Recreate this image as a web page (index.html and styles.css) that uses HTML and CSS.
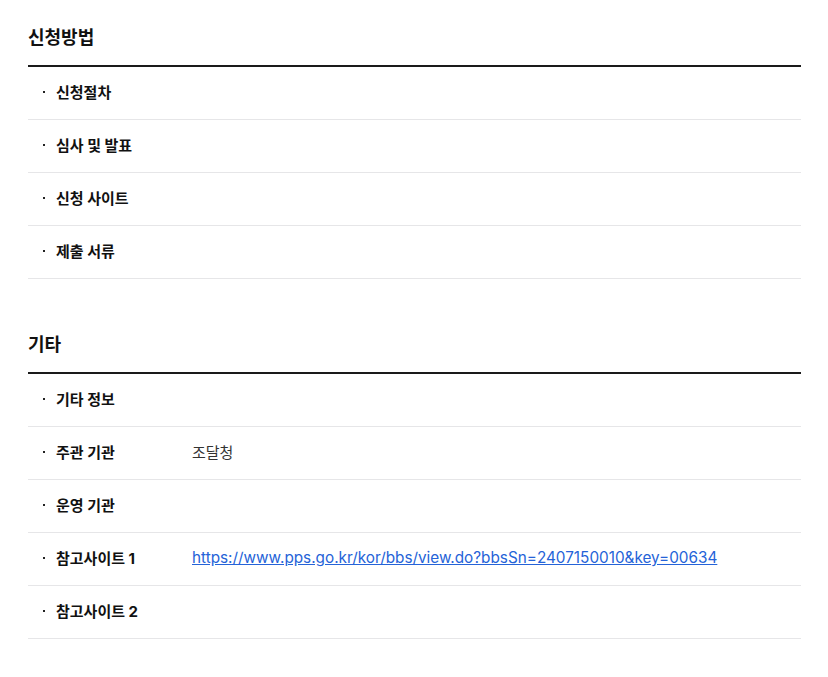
FILE: index.html
```html
<!DOCTYPE html>
<html lang="ko">
<head>
<meta charset="utf-8">
<link rel="stylesheet" href="styles.css">
</head>
<body>
<div class="page">
  <section class="section">
    <h3 class="section-title">신청방법</h3>
    <ul class="rows">
      <li class="row"><span class="bullet"></span><span class="label">신청절차</span><span class="value"></span></li>
      <li class="row"><span class="bullet"></span><span class="label">심사 및 발표</span><span class="value"></span></li>
      <li class="row"><span class="bullet"></span><span class="label">신청 사이트</span><span class="value"></span></li>
      <li class="row"><span class="bullet"></span><span class="label">제출 서류</span><span class="value"></span></li>
    </ul>
  </section>
  <section class="section">
    <h3 class="section-title">기타</h3>
    <ul class="rows">
      <li class="row"><span class="bullet"></span><span class="label">기타 정보</span><span class="value"></span></li>
      <li class="row"><span class="bullet"></span><span class="label">주관 기관</span><span class="value">조달청</span></li>
      <li class="row"><span class="bullet"></span><span class="label">운영 기관</span><span class="value"></span></li>
      <li class="row"><span class="bullet"></span><span class="label">참고사이트 1</span><span class="value"><a class="link" href="#">https://www.pps.go.kr/kor/bbs/view.do?bbsSn=2407150010&amp;key=00634</a></span></li>
      <li class="row"><span class="bullet"></span><span class="label">참고사이트 2</span><span class="value"></span></li>
    </ul>
  </section>
</div>
</body>
</html>
```
FILE: styles.css
```css
html, body {
  margin: 0;
  padding: 0;
  background: #fff;
}
body {
  font-family: Inter, "Noto Sans CJK KR", sans-serif;
  color: #111;
}
.page {
  width: 773px;
  padding: 0 27px 0 28px;
}
.section {
  margin-bottom: 28px;
}
.section-title {
  margin: 0;
  padding: 23px 0 16px;
  height: 26px;
  line-height: 26px;
  font-size: 18px;
  font-weight: 700;
  color: #111;
  font-family: "Noto Sans CJK KR", sans-serif;
  border-bottom: 2px solid #1a1a1a;
}
.rows {
  list-style: none;
  margin: 0;
  padding: 0;
}
.row {
  display: flex;
  align-items: center;
  box-sizing: border-box;
  height: 53px;
  border-bottom: 1px solid #e6e6e8;
  padding: 0 0 3px 15px;
  font-size: 15px;
}
.bullet {
  width: 2px;
  height: 2px;
  background: #222;
  margin-right: 11px;
  flex: none;
}
.label {
  width: 136px;
  flex: none;
  font-weight: 700;
  color: #111;
}
.value {
  color: #333;
  font-size: 15px;
}
.link {
  color: #2563d8;
  text-decoration: underline;
  font-size: 15.3px;
}
```
